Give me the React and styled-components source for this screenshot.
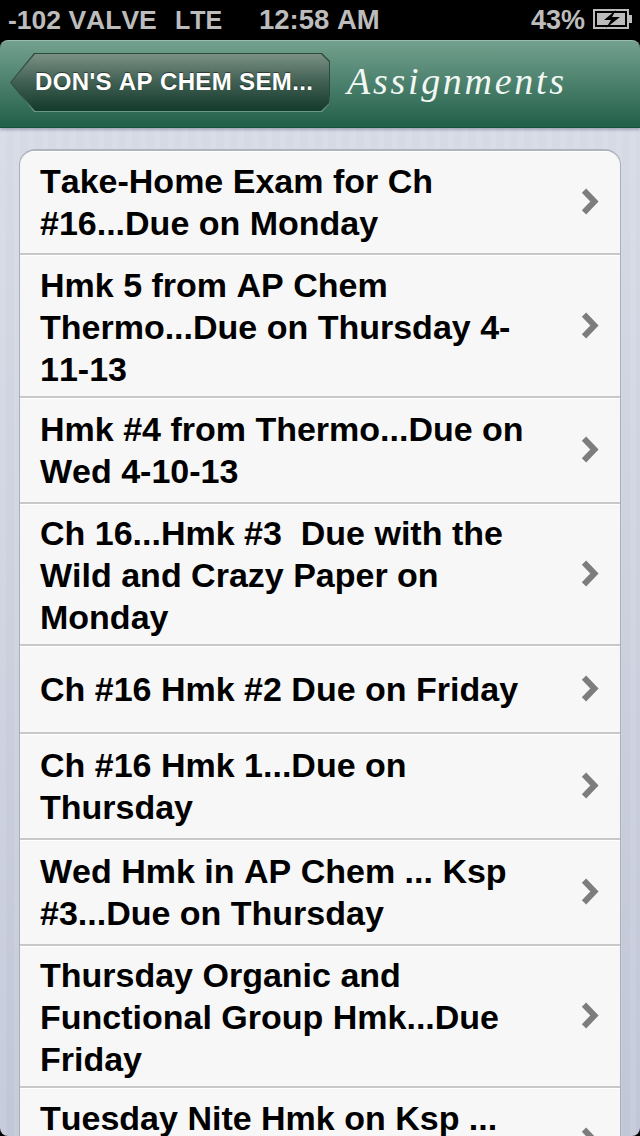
import styled, { createGlobalStyle } from "styled-components";

const GlobalStyle = createGlobalStyle`
  html, body {
    margin: 0;
    padding: 0;
    background: #000;
  }
  * {
    box-sizing: border-box;
  }
`;

const Phone = styled.div`
  width: 640px;
  height: 1136px;
  overflow: hidden;
  border-radius: 0 0 8px 8px;
  font-family: "Liberation Sans", Arial, sans-serif;
  font-kerning: none;
  display: flex;
  flex-direction: column;
`;

const StatusBar = styled.div`
  height: 40px;
  flex: none;
  background: #000;
  color: #bcbcbc;
  font-size: 27px;
  font-weight: 700;
  display: flex;
  align-items: center;
  padding: 0 7px 0 8px;
  white-space: nowrap;
`;

const Carrier = styled.span`
  width: 167px;
  font-size: 26.5px;
`;

const Network = styled.span`
  width: 84px;
  font-size: 25px;
`;

const Clock = styled.span`
  flex: 1;
  font-size: 27.5px;
`;

const Percent = styled.span`
  margin-right: 8px;
  padding-left: 1px;
`;

const NavBar = styled.div`
  height: 88px;
  flex: none;
  position: relative;
  z-index: 1;
  display: flex;
  align-items: center;
  padding: 0 0 3px 10px;
  border-radius: 8px 8px 0 0;
  border-top: 1px solid #9cbcae;
  border-bottom: 1px solid #17503c;
  background: linear-gradient(#74a18f, #215f49);
  box-shadow: 0 2px 3px rgba(60, 70, 90, 0.35);
`;

const BackEdge = styled.div`
  width: 320px;
  height: 59px;
  padding: 1px;
  background: linear-gradient(#2c4a3e, #2c4a3e 70%, #6d9a87);
  clip-path: polygon(0 50%, 24px 0, calc(100% - 8px) 0, 100% 8px, 100% calc(100% - 8px), calc(100% - 8px) 100%, 24px 100%);
`;

const BackFace = styled.div`
  height: 100%;
  display: flex;
  align-items: center;
  padding: 0 0 1px 24px;
  color: #fff;
  font-size: 24px;
  font-weight: 700;
  letter-spacing: 0.36px;
  white-space: nowrap;
  text-shadow: 0 -1px 1px rgba(0, 0, 0, 0.5);
  background: linear-gradient(#7b9085, #3f5f52 50%, #143a2c);
  clip-path: polygon(0 50%, 24px 0, calc(100% - 8px) 0, 100% 8px, 100% calc(100% - 8px), calc(100% - 8px) 100%, 24px 100%);
`;

const Title = styled.div`
  margin: 0 0 4px 17px;
  color: #f2f7f3;
  font-family: "Liberation Serif", serif;
  font-style: italic;
  font-size: 38px;
  letter-spacing: 2.7px;
  white-space: nowrap;
`;

const Content = styled.div`
  flex: 1;
  min-height: 0;
  padding: 21px 19px 0 19px;
  background:
    repeating-linear-gradient(90deg, rgba(255, 255, 255, 0.09) 0 6px, rgba(255, 255, 255, 0) 6px 14px),
    linear-gradient(#d6dae5, #c1c7d7);
`;

const List = styled.div`
  border: 1px solid #a9aeb9;
  border-top: 2px solid #b0b4bd;
  border-bottom: none;
  border-radius: 16px 16px 0 0;
  background: #f7f7f7;
  overflow: hidden;
`;

const Row = styled.div`
  height: ${(props) => props.$height}px;
  display: flex;
  align-items: center;
  padding: 0 20px 0 20px;
  border-bottom: 2px solid #c8c8c8;
  box-shadow: inset 0 1px 0 #fff;

  &:last-child {
    border-bottom: none;
  }
`;

const Label = styled.div`
  flex: 1;
  align-self: ${(props) => (props.$top ? "flex-start" : "center")};
  margin-top: ${(props) => props.$offset || 0}px;
  color: #000;
  font-size: 34px;
  font-weight: 700;
  line-height: 42px;
  white-space: pre-wrap;
`;

const Chevron = styled.svg`
  width: 20px;
  height: 28px;
  flex: none;
`;

const Arrow = () => (
  <Chevron viewBox="0 0 20 28">
    <path d="M4 2.7 L14.4 13.5 L4 24.3" fill="none" stroke="#7d7d7d" strokeWidth="6" />
  </Chevron>
);

const rows = [
  { height: 104, text: "Take-Home Exam for Ch\n#16...Due on Monday" },
  { height: 143, text: "Hmk 5 from AP Chem\nThermo...Due on Thursday 4-\n11-13", offset: 2 },
  { height: 106, text: "Hmk #4 from Thermo...Due on\nWed 4-10-13" },
  { height: 142, text: "Ch 16...Hmk #3  Due with the\nWild and Crazy Paper on\nMonday", offset: 2 },
  { height: 88, text: "Ch #16 Hmk #2 Due on Friday" },
  { height: 106, text: "Ch #16 Hmk 1...Due on\nThursday" },
  { height: 106, text: "Wed Hmk in AP Chem ... Ksp\n#3...Due on Thursday" },
  { height: 142, text: "Thursday Organic and\nFunctional Group Hmk...Due\nFriday", offset: 2 },
  { height: 106, text: "Tuesday Nite Hmk on Ksp ...", top: true, offset: 9 },
];

const Battery = () => (
  <svg width="40" height="22" viewBox="0 0 40 22">
    <rect x="1" y="1" width="34" height="18" fill="none" stroke="#bcbcbc" strokeWidth="2" />
    <rect x="4" y="4" width="28" height="12" fill="#bcbcbc" />
    <rect x="36" y="6" width="3" height="8" fill="#bcbcbc" />
    <path d="M23 1 L11 11 H18 L13 19 L27 8 H19 Z" fill="#000" />
  </svg>
);

const App = () => {
  return (
    <Phone>
      <GlobalStyle />
      <StatusBar>
        <Carrier>-102 VALVE</Carrier>
        <Network>LTE</Network>
        <Clock>12:58 AM</Clock>
        <Percent>43%</Percent>
        <Battery />
      </StatusBar>
      <NavBar>
        <BackEdge>
          <BackFace>DON'S AP CHEM SEM...</BackFace>
        </BackEdge>
        <Title>Assignments</Title>
      </NavBar>
      <Content>
        <List>
          {rows.map((row) => (
            <Row key={row.text} $height={row.height}>
              <Label $top={row.top} $offset={row.offset}>{row.text}</Label>
              <Arrow />
            </Row>
          ))}
        </List>
      </Content>
    </Phone>
  );
};

export default App;
